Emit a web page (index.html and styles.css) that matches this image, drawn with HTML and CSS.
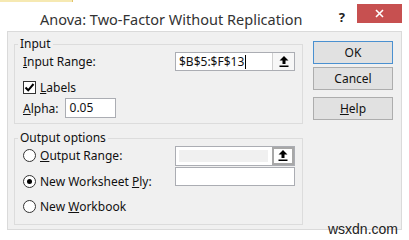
FILE: index.html
```html
<!DOCTYPE html>
<html lang="en">
<head>
  <meta charset="UTF-8">
  <title>Anova: Two-Factor Without Replication</title>
  <link rel="stylesheet" href="styles.css">
</head>
<body>
  <div class="sheet-strip"><span class="cell"></span></div>
  <div class="titlebar">
    <span class="title">Anova: Two-Factor Without Replication</span>
    <span class="help-mark">?</span>
    <span class="close">
      <svg width="9" height="9" viewBox="0 0 9 9"><path d="M1 1 L8 8 M8 1 L1 8" stroke="#fff" stroke-width="1.6"/></svg>
    </span>
  </div>
  <div class="panel">
    <div class="groups">
      <fieldset class="group input-group">
        <legend>Input</legend>
        <div class="row row-range">
          <span class="field-label"><u>I</u>nput Range:</span>
          <div class="range-box">
            <span class="range-field">$B$5:$F$13<span class="caret"></span></span>
            <span class="collapse-btn">
              <svg width="10" height="11" viewBox="0 0 10 11"><polygon points="5,0 9.5,4.5 6.5,4.5 6.5,8 3.5,8 3.5,4.5 0.5,4.5" fill="#000"/><rect x="0.5" y="9.5" width="9" height="1.5" fill="#000"/></svg>
            </span>
          </div>
        </div>
        <div class="row row-check">
          <span class="checkbox">
            <svg width="11" height="11" viewBox="0 0 11 11"><path d="M1.5 5.5 L4.2 8.3 L9.5 2" stroke="#000" stroke-width="2" fill="none"/></svg>
          </span>
          <span><u>L</u>abels</span>
        </div>
        <div class="row row-alpha">
          <span class="field-label"><u>A</u>lpha:</span>
          <span class="alpha-box">0.05</span>
        </div>
      </fieldset>
      <fieldset class="group output-group">
        <legend>Output options</legend>
        <div class="row row-out">
          <span class="radio"></span>
          <span><u>O</u>utput Range:</span>
          <div class="range-box disabled">
            <span class="range-field"><span class="range-fill"></span></span>
            <span class="collapse-btn pressed">
              <svg width="10" height="11" viewBox="0 0 10 11"><polygon points="5,0 9.5,4.5 6.5,4.5 6.5,8 3.5,8 3.5,4.5 0.5,4.5" fill="#000"/><rect x="0.5" y="9.5" width="9" height="1.5" fill="#000"/></svg>
            </span>
          </div>
        </div>
        <div class="row row-ply">
          <span class="radio checked"></span>
          <span>New Worksheet <u>P</u>ly:</span>
          <span class="ply-box"></span>
        </div>
        <div class="row row-book">
          <span class="radio"></span>
          <span>New <u>W</u>orkbook</span>
        </div>
      </fieldset>
    </div>
    <div class="buttons">
      <button class="btn btn-default">OK</button>
      <button class="btn">Cancel</button>
      <button class="btn btn-help"><u>H</u>elp</button>
    </div>
  </div>
  <div class="watermark">wsxdn.com</div>
</body>
</html>
```

FILE: styles.css
```css
body {
  margin: 0;
  width: 409px;
  height: 240px;
  overflow: hidden;
  position: relative;
  background: #fff;
  font-family: "Noto Sans", sans-serif;
  font-size: 12px;
  color: #111;
}
.sheet-strip {
  height: 3px;
  display: flex;
}
.sheet-strip .cell {
  width: 72px;
  height: 2px;
  background: #f6e9b2;
  border-right: 1px solid #e2c36a;
}
.titlebar {
  height: 28px;
  display: flex;
  align-items: flex-start;
}
.title {
  margin: 6px 0 0 40px;
  font-size: 14.5px;
  line-height: 20px;
  color: #333;
}
.help-mark {
  margin: 5px 0 0 auto;
  font-weight: bold;
  font-size: 13px;
  color: #222;
}
.close {
  width: 45px;
  height: 19px;
  margin: 1px 7px 0 12px;
  background: #c75050;
  display: flex;
  align-items: center;
  justify-content: center;
}
.panel {
  margin: 0 7px;
  height: 199px;
  box-sizing: border-box;
  border: 1px solid #dadada;
  background: #f0f0f0;
  display: flex;
  padding: 5px 0 0 6px;
}
.groups {
  width: 289px;
}
.group {
  margin: 0;
  padding: 0 7px 5px 8px;
  border: 1px solid #dcdcdc;
  min-width: 0;
}
.group legend {
  margin-left: -5px;
  padding: 0 2px;
  line-height: 14px;
}
.output-group {
  margin-top: 7px;
  padding-bottom: 9px;
}
.row {
  display: flex;
  align-items: center;
}
.row-range {
  margin-top: 1px;
}
.row-check {
  margin-top: 8px;
  gap: 4px;
}
.row-alpha {
  margin-top: 2px;
}
.range-box {
  margin-left: auto;
  width: 120px;
  height: 19px;
  box-sizing: border-box;
  border: 1px solid #abadb3;
  background: #fff;
  display: flex;
}
.range-field {
  flex: 1;
  display: flex;
  align-items: center;
  padding-left: 3px;
  line-height: 17px;
}
.caret {
  width: 1px;
  height: 14px;
  background: #000;
  margin-left: 1px;
}
.collapse-btn {
  width: 21px;
  border-left: 1px solid #d0d0d0;
  background: #f7f7f7;
  display: flex;
  align-items: center;
  justify-content: center;
}
.range-box.disabled {
  height: 20px;
}
.disabled .range-field {
  padding: 3px 4px 3px 3px;
}
.range-fill {
  flex: 1;
  height: 12px;
  background: #f0f0f0;
}
.collapse-btn.pressed {
  width: 18px;
  border: 2px solid #a8a8a8;
  background: #fff;
}
.checkbox {
  width: 13px;
  height: 13px;
  box-sizing: border-box;
  border: 1px solid #333;
  background: #fff;
  display: flex;
  align-items: center;
  justify-content: center;
}
.alpha-box {
  margin-left: 6px;
  width: 51px;
  height: 20px;
  box-sizing: border-box;
  border: 1px solid #abadb3;
  background: #fff;
  padding-left: 4px;
  line-height: 18px;
}
.radio {
  width: 13px;
  height: 13px;
  box-sizing: border-box;
  border: 1px solid #333;
  border-radius: 50%;
  background: #fff;
  margin-right: 4px;
  display: flex;
  align-items: center;
  justify-content: center;
}
.radio.checked::after {
  content: "";
  width: 5px;
  height: 5px;
  border-radius: 50%;
  background: #000;
}
.row-out {
  height: 21px;
}
.row-ply {
  margin-top: 1px;
  align-items: flex-start;
}
.row-ply span:nth-child(2) {
  margin-top: 6px;
}
.row-ply .radio {
  margin-top: 8px;
}
.ply-box {
  margin-left: auto;
  width: 120px;
  height: 19px;
  box-sizing: border-box;
  border: 1px solid #abadb3;
  background: #fff;
}
.row-book {
  margin-top: 8px;
}
.buttons {
  margin: 4px 0 0 10px;
  display: flex;
  flex-direction: column;
}
.btn {
  width: 80px;
  height: 23px;
  padding: 0;
  font: inherit;
  color: #111;
  background: #e1e1e1;
  border: 1px solid #adadad;
}
.btn-default {
  border-color: #4a90d0;
}
.btn + .btn {
  margin-top: 3px;
}
.btn-help {
  margin-top: 7px !important;
}
.watermark {
  position: absolute;
  right: 11px;
  bottom: 3px;
  font-family: "Liberation Sans", sans-serif;
  font-size: 14px;
  color: #222;
}
```
